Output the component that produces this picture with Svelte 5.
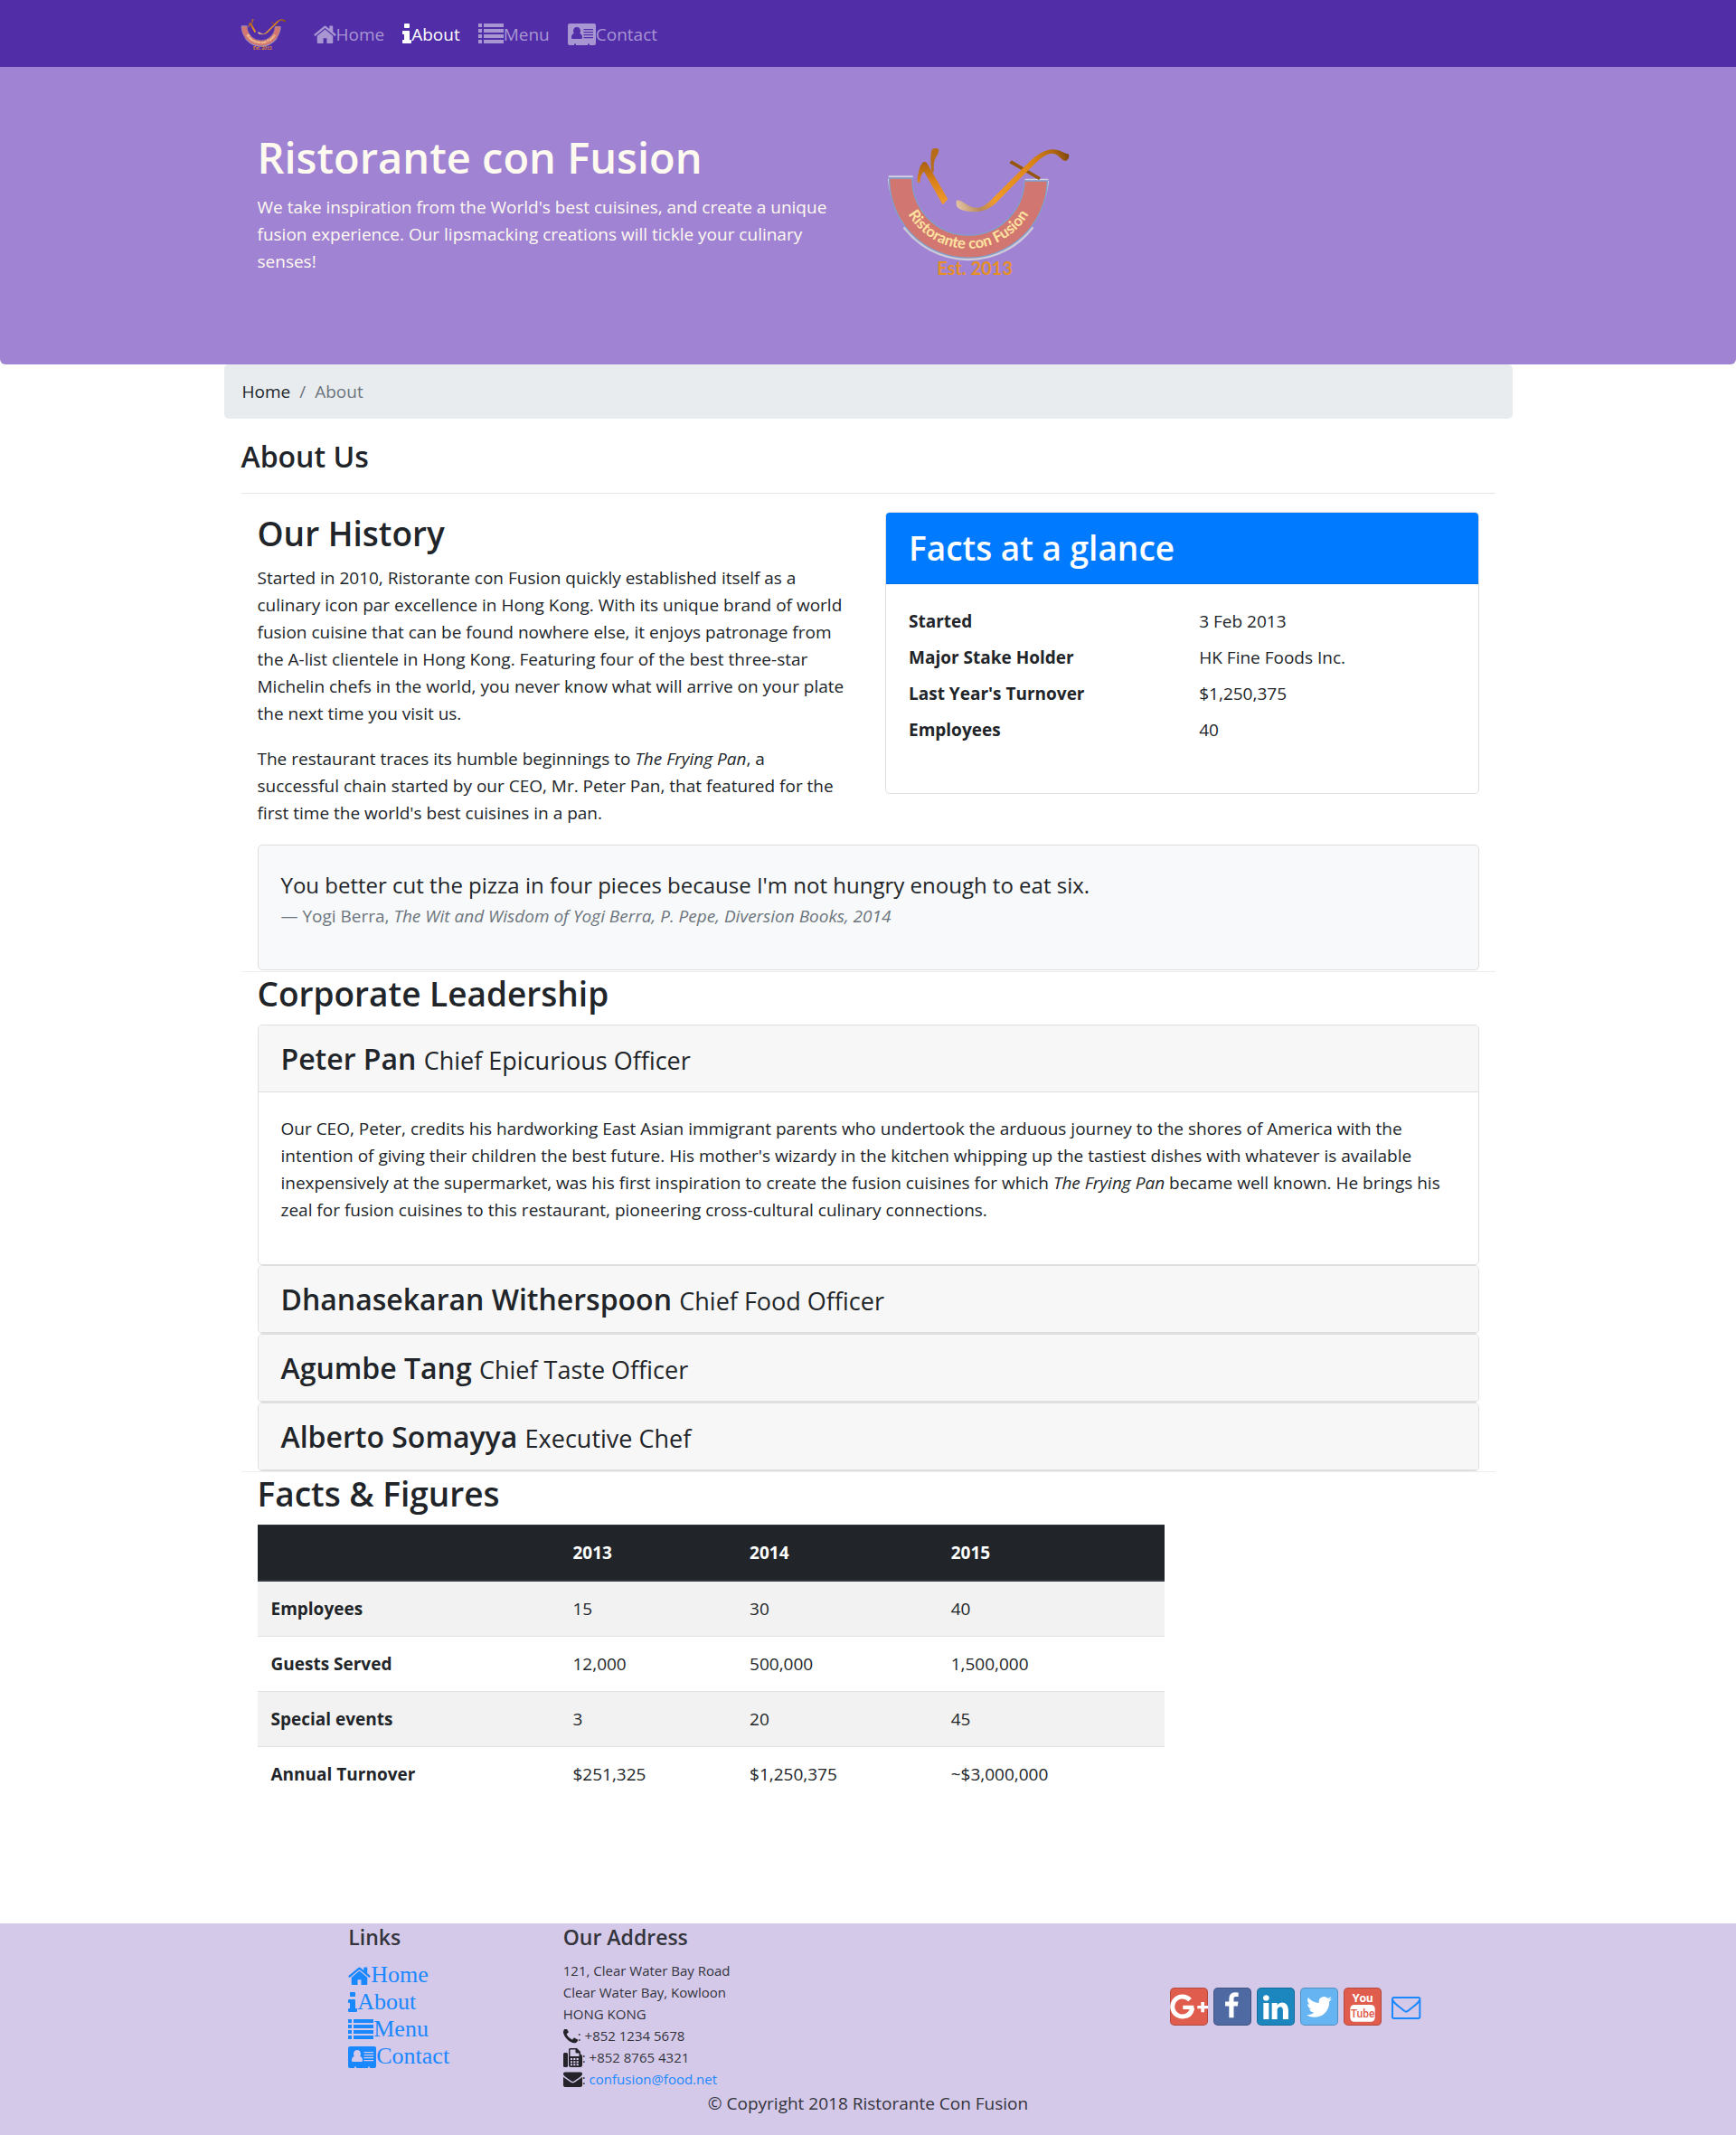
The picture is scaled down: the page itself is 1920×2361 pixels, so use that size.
<script>
  const navItems = [
    { label: 'Home', icon: 'home' },
    { label: 'About', icon: 'info' },
    { label: 'Menu', icon: 'list' },
    { label: 'Contact', icon: 'card' }
  ];

  const facts = [
    ['Started', '3 Feb 2013'],
    ['Major Stake Holder', 'HK Fine Foods Inc.'],
    ["Last Year's Turnover", '$1,250,375'],
    ['Employees', '40']
  ];

  const leaders = [
    { name: 'Peter Pan', role: 'Chief Epicurious Officer' },
    { name: 'Dhanasekaran Witherspoon', role: 'Chief Food Officer' },
    { name: 'Agumbe Tang', role: 'Chief Taste Officer' },
    { name: 'Alberto Somayya', role: 'Executive Chef' }
  ];

  const figures = [
    ['Employees', '15', '30', '40'],
    ['Guests Served', '12,000', '500,000', '1,500,000'],
    ['Special events', '3', '20', '45'],
    ['Annual Turnover', '$251,325', '$1,250,375', '~$3,000,000']
  ];

  const socials = [
    { name: 'Google Plus', key: 'google' },
    { name: 'Facebook', key: 'facebook' },
    { name: 'LinkedIn', key: 'linkedin' },
    { name: 'Twitter', key: 'twitter' },
    { name: 'YouTube', key: 'youtube' },
    { name: 'Email', key: 'mail' }
  ];

  let peterOpen = $state(true);
</script>

{#snippet logo(id)}
  <svg class="logo" viewBox="57 60 621 444" role="img" aria-label="Ristorante con Fusion logo">
    <defs>
      <path id="{id}-arc" d="M101 173A232 232 0 0 0 565 173" />
      <linearGradient id="{id}-gold" x1="0" y1="0" x2="0" y2="1">
        <stop offset="0" stop-color="#a8600f" />
        <stop offset="0.45" stop-color="#d9801a" />
        <stop offset="1" stop-color="#f39c2d" />
      </linearGradient>
      <linearGradient id="{id}-hook" gradientUnits="userSpaceOnUse" x1="293" y1="255" x2="666" y2="100">
        <stop offset="0" stop-color="#e3c3a4" />
        <stop offset="0.16" stop-color="#b98a58" />
        <stop offset="0.3" stop-color="#f09a2a" />
        <stop offset="0.7" stop-color="#dd8419" />
        <stop offset="0.9" stop-color="#b0670f" />
        <stop offset="1" stop-color="#80480a" />
      </linearGradient>
    </defs>
    <path d="M68 166H149M521 176H598" fill="none" stroke="#d5cfdf" stroke-width="6" />
    <path d="M68 172A266 266 0 0 0 598 180" fill="none" stroke="#cfcbd8" stroke-width="5" />
    <path d="M120 333A266 266 0 0 0 546 333" fill="none" stroke="#cfcbd8" stroke-width="10" />
    <path d="M71 171H147A186 185 0 0 0 519 180H595A262 260 0 0 1 71 171Z" fill="#d17670" stroke="#7fa0cf" stroke-width="4" />
    <path d="M163 184C165 155 172 124 185 117C191 116 195 119 198 125L265 241L248 259L186 149C177 156 174 169 172 186Z" fill="url(#{id}-gold)" />
    <path d="M211 148C207 120 207 84 213 75C219 70 231 71 235 76C235 95 222 100 219 120C217 134 220 147 216 154Z" fill="#b66c18" />
    <path d="M476 112L573 169L567 177L469 121Z" fill="#95560f" />
    <path d="M293 246C309 240 320 259 345 267C371 275 389 262 406 246L520 132C552 101 575 80 609 76C636 74 646 88 665 91C670 101 664 113 654 114C638 110 633 89 609 89C585 91 562 115 538 139L432 246C409 269 387 283 349 283C318 281 293 274 293 258Z" fill="url(#{id}-hook)" />
    <text class="logo-name" text-anchor="middle"><textPath href="#{id}-arc" startOffset="50%">Ristorante con Fusion</textPath></text>
    <text class="logo-date" x="354" y="492" text-anchor="middle">Est. 2013</text>
  </svg>
{/snippet}

{#snippet icon(name)}
  {#if name === 'home'}
    <svg class="icon home" viewBox="89 220 1614 1316" aria-hidden="true"><path d="M1472 992v480q0 26-19 45t-45 19h-384v-384h-256v384h-384q-26 0-45-19t-19-45v-480q0-1 .5-3t.5-3l575-474 575 474q1 2 1 6zm223-69l-62 74q-8 9-21 11h-3q-13 0-21-7l-692-577-692 577q-12 8-24 7-13-2-21-11l-62-74q-8-10-7-23.5t11-21.5l719-599q32-26 76-26t76 26l244 204v-195q0-14 9-23t23-9h192q14 0 23 9t9 23v408l219 182q10 8 11 21.5t-7 23.5z" /></svg>
  {:else if name === 'info'}
    <svg class="icon info" viewBox="576 128 640 1408" aria-hidden="true"><path d="M1216 1344v128q0 26-19 45t-45 19h-512q-26 0-45-19t-19-45v-128q0-26 19-45t45-19h64v-384h-64q-26 0-45-19t-19-45v-128q0-26 19-45t45-19h384q26 0 45 19t19 45v576h64q26 0 45 19t19 45zm-128-1152v192q0 26-19 45t-45 19h-256q-26 0-45-19t-19-45v-192q0-26 19-45t45-19h256q26 0 45 19t19 45z" /></svg>
  {:else if name === 'list'}
    <svg class="icon list" viewBox="0 0 28 22" aria-hidden="true"><path d="M0 0h4v4H0zM6 0h22v4H6zM0 6h4v4H0zM6 6h22v4H6zM0 12h4v4H0zM6 12h22v4H6zM0 18h4v4H0zM6 18h22v4H6z" /></svg>
  {:else if name === 'card'}
    <svg class="icon card-icon" viewBox="0 0 31 24" aria-hidden="true"><path fill-rule="evenodd" d="M2 0H29Q31 0 31 2V22Q31 24 29 24H24V22.5H22V24H9V22.5H7V24H2Q0 24 0 22V2Q0 0 2 0ZM10 4C7.500 4 6 6 6 8.500C6 9.500 6.300 10.300 6.800 11C5 11.300 4 13 4 15.500C4 16.600 4.800 17 5.500 17H14.500C15.300 17 16 16.600 16 15.500C16 13 15 11.300 13.200 11C13.700 10.300 14 9.500 14 8.500C14 6 12.500 4 10 4ZM17.500 6V7.200H28V6ZM17.500 9V10.200H28V9ZM17.500 12V13.200H28V12ZM17.500 15V16.200H28V15Z" /></svg>
  {:else if name === 'phone'}
    <svg class="icon phone" viewBox="192 256 1408 1280" aria-hidden="true"><path d="M1600 1240q0 27-10 70.500t-21 68.500q-21 50-122 106-94 51-186 51-27 0-53-3.500t-57.500-12.500-47-14.500-55.500-20.500-49-18q-98-35-175-83-127-79-264-216t-216-264q-48-77-83-175-3-9-18-49t-20.500-55.500-14.500-47-12.500-57.500-3.500-53q0-92 51-186 56-101 106-122 25-11 68.500-21t70.500-10q14 0 21 3 18 6 53 76 11 19 30 54t35 63.500 31 53.500q3 4 17.500 25t21.500 35.500 7 28.500q0 20-28.500 50t-62 55-62 53-28.500 46q0 9 5 22.500t8.500 20.500 14 24 11.500 19q76 137 174 235t235 174q2 1 19 11.500t24 14 20.500 8.500 22.500 5q18 0 46-28.500t53-62 55-62 50-28.500q14 0 28.500 7t35.500 21.500 25 17.500q25 15 53.500 31t63.500 35 54 30q70 35 76 53 3 7 3 21z" /></svg>
  {:else if name === 'fax'}
    <svg class="icon fax" viewBox="0 0 21 21" aria-hidden="true"><path fill-rule="evenodd" d="M1.500 5H3.500Q5 5 5 6.500V19.500Q5 21 3.500 21H1.500Q0 21 0 19.500V6.500Q0 5 1.500 5ZM6 1.500Q6 0 7.500 0H15L19 4V6.500Q21 7 21 9V18.500Q21 21 18.500 21H8.500Q6 21 6 18.500ZM7.500 1.500V9H17.500V5.500H14.500Q13.500 5.500 13.500 4.500V1.500ZM8 11V13H10V11ZM11.200 11V13H13.400V11ZM14.600 11V13H16.800V11ZM8 14.200V16.200H10V14.200ZM11.200 14.200V16.200H13.400V14.200ZM14.600 14.200V16.200H16.800V14.200ZM8 17.300V19.300H10V17.300ZM11.200 17.300V19.300H13.400V17.300ZM14.600 17.300V19.300H16.800V17.300Z" /></svg>
  {:else if name === 'envelope'}
    <svg class="icon envelope" viewBox="0 232 1792 1432" aria-hidden="true"><path d="M1792 710v794q0 66-47 113t-113 47h-1472q-66 0-113-47t-47-113v-794q44 49 101 87 362 246 497 345 57 42 92.500 65.500t94.500 48 110 24.500h2q51 0 110-24.500t94.500-48 92.500-65.500q170-123 498-345 57-39 100-87zm0-294q0 79-49 151t-122 123q-376 261-468 325-10 7-42.500 31t-54 38.500-52 32.500-57.500 27-50 9h-2q-23 0-50-9t-57.500-27-52-32.500-54-38.500-42.500-31q-91-64-262-182.500t-205-142.500q-62-42-117-115.500t-55-136.500q0-78 41.500-130t118.500-52h1472q65 0 112.500 47t47.500 113z" /></svg>
  {/if}
{/snippet}

{#snippet socialIcon(key)}
  <svg viewBox="0 0 126 126" aria-hidden="true">
    {#if key === 'google'}
      <path d="M66 41A33 33 0 1 0 74 67" fill="none" stroke="#fff" stroke-width="15" />
      <path d="M43 59H79Q83 91 56 102L53 90Q66 84 66 72H43Z" fill="#fff" />
      <path d="M103 48h11v12h12v10h-12v12h-11V70H91V60h12z" fill="#fff" />
    {:else if key === 'facebook'}
      <path transform="translate(15 16) scale(.0505)" d="M1343 12v264h-157q-86 0-116 36t-30 108v189h293l-39 296h-254v759h-306v-759h-255v-296h255v-218q0-186 104-288.500t277-102.500q147 0 228 12z" fill="#fff" />
    {:else if key === 'linkedin'}
      <path transform="translate(14 17) scale(.0545)" d="M477 625v991h-330v-991h330zm21-306q1 73-50.500 122t-135.500 49h-2q-82 0-132-49t-50-122q0-74 51.500-122.500t134.500-48.500 133 48.500 51 122.500zm1166 729v568h-329v-530q0-105-40.500-164.500t-126.500-59.500q-63 0-105.500 34.500t-63.500 85.500q-11 30-11 81v553h-329q2-399 2-647t-1-296l-1-48h329v144h-2q20-32 41-56t56.500-52 87-43.500 114.500-15.500q171 0 275 113.500t104 332.500z" fill="#fff" />
    {:else if key === 'twitter'}
      <path transform="translate(15 16) scale(.0535)" d="M1684 408q-67 98-162 167 1 14 1 42 0 130-38 259.500t-115.500 248.500-184.500 210.500-258 146-323 54.500q-271 0-496-145 35 4 78 4 225 0 401-138-105-2-188-64.500t-114-159.500q33 5 61 5 43 0 85-11-112-23-185.500-111.500t-73.500-205.500v-4q68 38 146 41-66-44-105-115t-39-154q0-88 44-163 121 149 294.500 238.500t371.500 99.500q-8-38-8-74 0-134 94.500-228.500t228.500-94.500q140 0 236 102 109-21 205-78-37 115-142 178 93-10 186-50z" fill="#fff" />
    {:else if key === 'youtube'}
      <rect x="22" y="57" width="82" height="56" rx="13" fill="#fff" />
      <text class="yt" x="63" y="49" text-anchor="middle" fill="#fff">You</text>
      <text class="yt tube" x="63" y="98" text-anchor="middle">Tube</text>
    {:else}
      <rect x="18" y="33" width="91" height="69" rx="5" fill="none" stroke="currentColor" stroke-width="6" />
      <path d="M19 42C24 53 36 60 50 71C57 77 60 80 63 80S70 77 77 71C91 60 103 53 108 42" fill="none" stroke="currentColor" stroke-width="6" />
    {/if}
  </svg>
{/snippet}

<nav class="navbar">
  <div class="container nav-inner">
    <a class="brand" href="#home">{@render logo('brand')}</a>
    {#each navItems as item}
      <a class="nav-link" class:active={item.label === 'About'} href="#{item.label.toLowerCase()}">{@render icon(item.icon)}{item.label}</a>
    {/each}
  </div>
</nav>

<header class="jumbotron">
  <div class="container inset hero">
    <div>
      <h1>Ristorante con Fusion</h1>
      <p>We take inspiration from the World's best cuisines, and create a unique fusion experience. Our lipsmacking creations will tickle your culinary senses!</p>
    </div>
    <div class="hero-logo">{@render logo('hero')}</div>
  </div>
</header>

<main class="container">
  <ol class="breadcrumb">
    <li><a href="#home">Home</a></li>
    <li class="current" aria-current="page">About</li>
  </ol>

  <div class="content">
    <h3>About Us</h3>
    <hr />

    <section class="row-content history">
      <div>
        <h2>Our History</h2>
        <p>Started in 2010, Ristorante con Fusion quickly established itself as a culinary icon par excellence in Hong Kong. With its unique brand of world fusion cuisine that can be found nowhere else, it enjoys patronage from the A-list clientele in Hong Kong. Featuring four of the best three-star Michelin chefs in the world, you never know what will arrive on your plate the next time you visit us.</p>
        <p>The restaurant traces its humble beginnings to <em>The Frying Pan</em>, a successful chain started by our CEO, Mr. Peter Pan, that featured for the first time the world's best cuisines in a pan.</p>
      </div>
      <div class="card facts">
        <h2>Facts at a glance</h2>
        <dl>
          {#each facts as [term, value]}
            <dt>{term}</dt>
            <dd>{value}</dd>
          {/each}
        </dl>
      </div>
      <blockquote class="card quote">
        <p>You better cut the pizza in four pieces because I'm not hungry enough to eat six.</p>
        <footer>— Yogi Berra, <cite>The Wit and Wisdom of Yogi Berra, P. Pepe, Diversion Books, 2014</cite></footer>
      </blockquote>
    </section>

    <section class="row-content">
      <h2>Corporate Leadership</h2>
      {#each leaders as leader, i}
        <div class="card">
          <h3 class="card-header">
            {#if i === 0}
              <button type="button" aria-expanded={peterOpen} onclick={() => (peterOpen = !peterOpen)}>{leader.name} <small>{leader.role}</small></button>
            {:else}
              <button type="button" aria-expanded="false">{leader.name} <small>{leader.role}</small></button>
            {/if}
          </h3>
          {#if i === 0 && peterOpen}
            <div class="card-body">
              <p>Our CEO, Peter, credits his hardworking East Asian immigrant parents who undertook the arduous journey to the shores of America with the intention of giving their children the best future. His mother's wizardy in the kitchen whipping up the tastiest dishes with whatever is available inexpensively at the supermarket, was his first inspiration to create the fusion cuisines for which <em>The Frying Pan</em> became well known. He brings his zeal for fusion cuisines to this restaurant, pioneering cross-cultural culinary connections.</p>
            </div>
          {/if}
        </div>
      {/each}
    </section>

    <section class="row-content figures">
      <h2>Facts &amp; Figures</h2>
      <table>
        <colgroup><col class="c1" /><col class="c2" /><col class="c3" /><col class="c4" /></colgroup>
        <thead>
          <tr><td></td><th scope="col">2013</th><th scope="col">2014</th><th scope="col">2015</th></tr>
        </thead>
        <tbody>
          {#each figures as [label, ...values]}
            <tr>
              <th scope="row">{label}</th>
              {#each values as value}<td>{value}</td>{/each}
            </tr>
          {/each}
        </tbody>
      </table>
    </section>
  </div>
</main>

<footer class="site-footer">
  <div class="container footer-grid">
    <div class="links">
      <h5>Links</h5>
      <ul>
        {#each navItems as item}
          <li><a href="#{item.label.toLowerCase()}">{@render icon(item.icon)}{item.label}</a></li>
        {/each}
      </ul>
    </div>
    <div class="contact">
      <h5>Our Address</h5>
      <address>
        121, Clear Water Bay Road<br />
        Clear Water Bay, Kowloon<br />
        HONG KONG<br />
        {@render icon('phone')}: +852 1234 5678<br />
        {@render icon('fax')}: +852 8765 4321<br />
        {@render icon('envelope')}: <a href="mailto:confusion@food.net">confusion@food.net</a>
      </address>
    </div>
    <div class="social">
      {#each socials as social}
        <a class="social-btn {social.key}" href="#{social.key}" aria-label={social.name}>{@render socialIcon(social.key)}</a>
      {/each}
    </div>
  </div>
  <p class="copyright">© Copyright 2018 Ristorante Con Fusion</p>
</footer>

<style>
  :global(body) {
    margin: 0;
    background: #fff;
    color: #212529;
    font: 400 19px/30px 'Open Sans', 'Noto Sans', sans-serif;
  }
  :global(*) { box-sizing: border-box; }
  h1, h2, h3, h5, p, ol, ul, dl, dd, blockquote { margin: 0; padding: 0; }
  ol, ul { list-style: none; }
  a { text-decoration: none; }
  h1, h2, h3, h5 { font-weight: 600; }
  h2 { font-size: 37px; line-height: 48px; margin-bottom: 10px; }
  h3 { font-size: 32px; line-height: 43px; }
  h5 { font-size: 23px; line-height: 30px; margin-bottom: 10px; }
  p { margin-bottom: 20px; }
  svg { display: block; }

  .container { width: 100%; max-width: 1425px; margin: 0 auto; }
  .inset { padding: 0 37px; }

  .logo { width: 100%; height: auto; }
  .logo-name { font: 700 50px Lato, sans-serif; fill: #ffe3a0; }
  .logo-date { font: 700 60px Lato, sans-serif; fill: #e78f27; }

  .icon { display: inline-block; fill: currentColor; vertical-align: -3px; }
  .home { width: 25px; height: 20px; }
  .info { width: 10px; height: 22px; }
  .list { width: 28px; height: 22px; }
  .card-icon { width: 31px; height: 24px; vertical-align: -5px; }
  .phone { width: 16px; height: 16px; }
  .fax { width: 21px; height: 21px; vertical-align: -5px; }
  .envelope { width: 21px; height: 17px; }

  .navbar { background: #512da8; }
  .nav-inner { display: flex; align-items: center; min-height: 74px; padding: 2px 18px 0; }
  .brand { width: 51px; margin-right: 20px; }
  .nav-link { padding: 10px; color: #a896d3; }
  .nav-link.active { color: #fff; }

  .jumbotron { background: #a083d3; color: floralwhite; padding: 70px 0 79px; border-radius: 0 0 6px 6px; }
  .hero { display: grid; grid-template-columns: 1fr 1fr; column-gap: 38px; align-items: center; }
  h1 { font-size: 47px; line-height: 60px; margin-bottom: 10px; }
  .hero-logo { width: 207px; }

  .breadcrumb { display: flex; background: #e9ecef; border-radius: 5px; padding: 15px 20px; margin-bottom: 20px; }
  .breadcrumb a { color: #212529; }
  .current { color: #6c757d; }
  .current::before { content: '/'; padding: 0 10px; }

  .content { padding: 0 19px; }
  hr { border: 0; border-top: 1px solid #e5e5e5; margin: 19px 0 20px; }
  .row-content { padding: 0 18px; border-bottom: 1px solid #eee; }
  .history { display: grid; grid-template-columns: 1fr 1fr; column-gap: 38px; align-items: start; padding-bottom: 1px; }

  .card { border: 1px solid #dfdfdf; border-radius: 5px; overflow: hidden; }
  .facts h2 { background: #007bff; color: #fff; padding: 15px 25px; margin: 0; border-bottom: 1px solid #0070e8; }
  dl { display: grid; grid-template-columns: 1fr 1fr; column-gap: 38px; row-gap: 10px; padding: 26px 25px 55px; }
  dt, th { font-weight: 700; }
  .quote { grid-column: 1 / -1; background: #f8f9fa; padding: 25px 25px 44px; }
  .quote p { font-size: 24px; line-height: 38px; margin: 0; }
  .quote footer { color: #6c757d; }

  .card-header { background: #f7f7f7; border-bottom: 1px solid #dfdfdf; padding: 15px 25px; }
  .card-header button { display: block; border: 0; padding: 0; background: none; color: inherit; font: inherit; text-align: left; cursor: pointer; }
  small { font-size: 27px; line-height: 27px; font-weight: 400; }
  .card-body { padding: 25px; }

  .figures { border-bottom: 0; margin-bottom: 135px; }
  table { width: 1003px; max-width: 100%; table-layout: fixed; border-collapse: collapse; text-align: left; }
  .c1 { width: 33.3%; }
  .c2 { width: 19.5%; }
  .c3 { width: 22.2%; }
  .c4 { width: 25%; }
  th, td { padding: 15px; border-top: 1px solid #dee2e6; }
  thead { background: #212529; color: #fff; }
  thead th, thead td { border-top-color: #32383e; border-bottom: 2px solid #32383e; }
  tbody tr:nth-child(odd) { background: #f2f2f2; }

  .site-footer { background: #d5c9ea; color: #33343c; padding-bottom: 20px; }
  .footer-grid { display: grid; grid-template-columns: repeat(12, 1fr); }
  .links { grid-column: 2 / span 2; padding: 0 19px; }
  .contact { grid-column: 4 / span 5; padding: 0 19px; }
  .social { grid-column: 9 / span 4; display: flex; justify-content: center; align-items: center; gap: 6px; }
  .site-footer a { color: #1a88ff; }
  .links ul { padding-top: 2px; }
  .links a { font: 26px/30px 'Liberation Serif', serif; }
  .links li { height: 30px; white-space: nowrap; }
  address { font-style: normal; font-size: 15px; line-height: 24px; }
  address .icon { color: #25232a; }
  .social-btn { width: 42px; height: 42px; border-radius: 5px; box-shadow: inset 0 0 0 1px rgb(0 0 0 / 20%); }
  .google, .youtube { background: #e05c4c; }
  .facebook { background: #4f69a2; }
  .linkedin { background: #1b87be; }
  .twitter { background: #66b4f1; }
  .mail { box-shadow: none; }
  .yt { font: 700 40px Roboto, sans-serif; }
  .tube { font-size: 36px; font-weight: 500; fill: #e05c4c; }
  .copyright { text-align: center; margin: 0; }
</style>
